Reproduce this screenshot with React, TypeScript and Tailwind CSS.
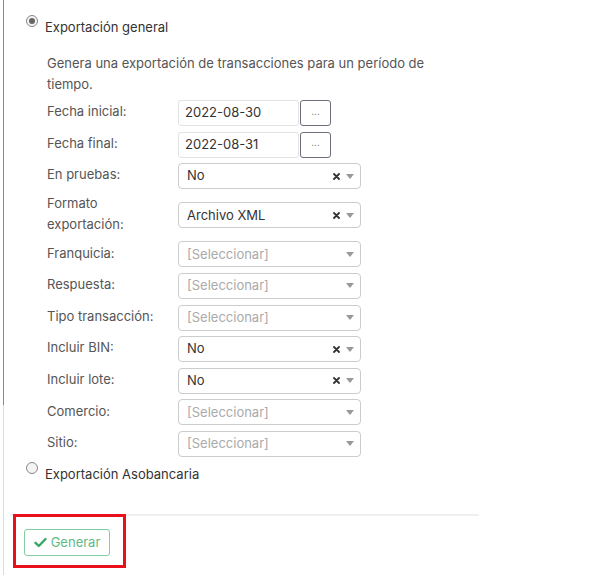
import React from "react";

const Caret = () => (
  <svg width="8" height="5" viewBox="0 0 8 5" className="ml-[6px]">
    <path d="M0 0 L8 0 L4 5 Z" fill="#999" />
  </svg>
);

const Clear = () => (
  <svg width="7" height="7" viewBox="0 0 7 7">
    <path d="M1 1 L6 6 M6 1 L1 6" stroke="#333" strokeWidth="1.8" strokeLinecap="round" />
  </svg>
);

function Select({ value, placeholder }: { value?: string; placeholder?: string }) {
  return (
    <div className="flex h-[26px] w-[183px] items-center rounded-[4px] border border-[#cccccc] bg-white pl-[8px] pr-[6px]">
      <span className={value ? "flex-1 text-[#333]" : "flex-1 text-[#aaa]"}>{value ?? placeholder}</span>
      {value ? <Clear /> : null}
      <Caret />
    </div>
  );
}

function DateField({ value }: { value: string }) {
  return (
    <div className="flex h-[26px] items-center gap-px">
      <div className="flex h-full w-[121px] items-center rounded-[3px] border border-[#e3e3e3] pl-[6px] text-[#333]">
        {value}
      </div>
      <div className="flex h-full w-[31px] items-center justify-center rounded-[3px] border border-[#6b6f7c] pb-[4px] text-[10px] text-[#777]">
        ...
      </div>
    </div>
  );
}

function Row({ label, children }: { label: React.ReactNode; children: React.ReactNode }) {
  return (
    <div className="flex items-center">
      <div className="w-[131px] -mt-[2px] leading-[21.5px] text-[#555]">{label}</div>
      {children}
    </div>
  );
}

function Radio({ checked }: { checked?: boolean }) {
  return (
    <span className="flex h-[12px] w-[12px] items-center justify-center rounded-full border border-[#888] bg-[#f4f4f4]">
      {checked ? <span className="h-[6px] w-[6px] rounded-full bg-[#666]" /> : null}
    </span>
  );
}

export default function App() {
  return (
    <div
      className="relative flex h-[575px] w-[589px] bg-white text-[13px]"
      style={{ fontFamily: "Inter, 'Noto Sans', sans-serif" }}
    >
      <div className="ml-[3px] flex w-px flex-col">
        <div className="h-[405px] bg-[#8a8a8a]" />
        <div className="flex-1 bg-[#dcdcdc]" />
      </div>
      <div className="flex flex-col">
        <div className="ml-[22px] mt-[15px] flex items-start">
          <Radio checked />
          <span className="ml-[7px] mt-[3px] leading-[18px] text-[#333]">Exportación general</span>
        </div>
        <div className="ml-[43px] mt-[17px] w-[392px] leading-[21px] text-[#555]">
          Genera una exportación de transacciones para un período de tiempo.
        </div>
        <div className="ml-[43px] mt-[5px] flex flex-col gap-[5.6px]">
          <Row label="Fecha inicial:">
            <DateField value="2022-08-30" />
          </Row>
          <Row label="Fecha final:">
            <DateField value="2022-08-31" />
          </Row>
          <Row label="En pruebas:">
            <Select value="No" />
          </Row>
          <Row
            label={
              <>
                Formato
                <br />
                exportación:
              </>
            }
          >
            <Select value="Archivo XML" />
          </Row>
          <Row label="Franquicia:">
            <Select placeholder="[Seleccionar]" />
          </Row>
          <Row label="Respuesta:">
            <Select placeholder="[Seleccionar]" />
          </Row>
          <Row label="Tipo transacción:">
            <Select placeholder="[Seleccionar]" />
          </Row>
          <Row label="Incluir BIN:">
            <Select value="No" />
          </Row>
          <Row label="Incluir lote:">
            <Select value="No" />
          </Row>
          <Row label="Comercio:">
            <Select placeholder="[Seleccionar]" />
          </Row>
          <Row label="Sitio:">
            <Select placeholder="[Seleccionar]" />
          </Row>
        </div>
        <div className="ml-[22px] mt-[5px] flex items-start">
          <Radio />
          <span className="ml-[7px] mt-[3px] leading-[18px] text-[#333]">Exportación Asobancaria</span>
        </div>
        <div className="ml-[6px] mt-[31px] h-[2px] w-[469px] bg-[#efefef]" />
        <div className="ml-[20px] mt-[13px]">
          <button className="flex h-[27px] w-[86px] items-center justify-center gap-[4px] rounded-[3px] border border-[#7fd0a0] bg-white text-[13px] text-[#5fbb86]">
            <svg width="13" height="11" viewBox="0 0 13 11">
              <path d="M1.5 5.8 L4.8 9 L11.5 2" stroke="#35a866" strokeWidth="2.4" fill="none" strokeLinecap="round" strokeLinejoin="round" />
            </svg>
            Generar
          </button>
        </div>
      </div>
      <div className="absolute left-[13px] top-[514px] h-[54px] w-[113px] border-[3px] border-[#e8101a]" />
    </div>
  );
}
